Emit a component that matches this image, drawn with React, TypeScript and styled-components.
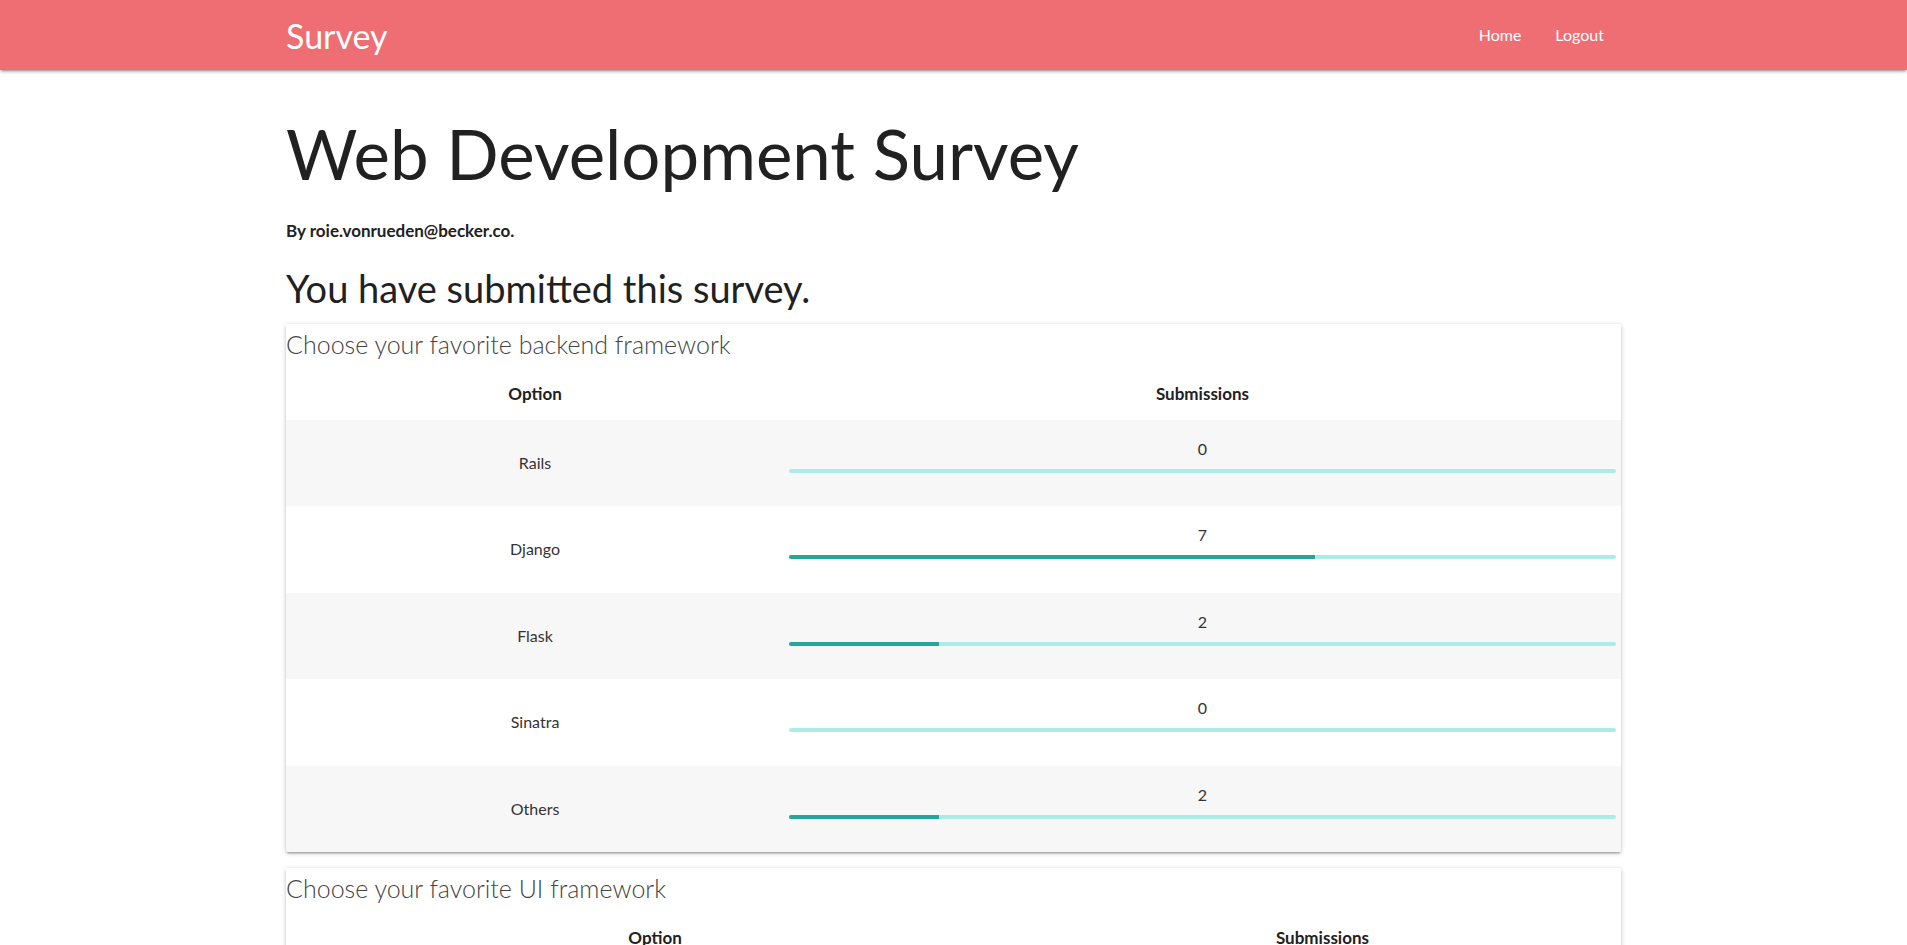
import React from 'react';
import styled, { createGlobalStyle } from 'styled-components';

interface Option {
  label: string;
  count: number;
}

interface Question {
  title: string;
  optionWidth: number;
  options: Option[];
}

const questions: Question[] = [
  {
    title: 'Choose your favorite backend framework',
    optionWidth: 498,
    options: [
      { label: 'Rails', count: 0 },
      { label: 'Django', count: 7 },
      { label: 'Flask', count: 2 },
      { label: 'Sinatra', count: 0 },
      { label: 'Others', count: 2 },
    ],
  },
  {
    title: 'Choose your favorite UI framework',
    optionWidth: 738,
    options: [
      { label: 'Bootstrap', count: 5 },
      { label: 'Materialize', count: 4 },
      { label: 'Foundation', count: 1 },
      { label: 'Others', count: 1 },
    ],
  },
];

const GlobalStyle = createGlobalStyle`
  html, body {
    margin: 0;
    padding: 0;
    background: #fff;
    font-family: Lato, "Noto Sans", sans-serif;
    color: rgba(0, 0, 0, 0.87);
  }
`;

const Nav = styled.nav`
  height: 70px;
  background-color: #ee6e73;
  box-shadow: 0 2px 2px 0 rgba(0, 0, 0, 0.14), 0 3px 1px -2px rgba(0, 0, 0, 0.12),
    0 1px 5px 0 rgba(0, 0, 0, 0.2);
`;

const NavInner = styled.div`
  width: 70%;
  height: 100%;
  margin: 0 auto;
  display: flex;
  align-items: center;
  justify-content: space-between;
`;

const Brand = styled.a`
  color: #fff;
  font-size: 34px;
  text-decoration: none;
`;

const NavLinks = styled.ul`
  display: flex;
  list-style: none;
  margin: 0;
  padding: 0;
`;

const NavLink = styled.a`
  display: block;
  padding: 0 17px;
  color: #fff;
  font-size: 16px;
  line-height: 20px;
  text-decoration: none;
`;

const Container = styled.main`
  width: 70%;
  margin: 0 auto;
  padding-bottom: 40px;
`;

const Title = styled.h1`
  margin: 46px 0 0;
  font-size: 69px;
  font-weight: 400;
  line-height: 110%;
  color: #212121;
`;

const Author = styled.p`
  margin: 28px 0 0;
  font-size: 17px;
  font-weight: 700;
  color: #212121;
`;

const Submitted = styled.h4`
  margin: 27px 0 14px;
  font-size: 38px;
  font-weight: 400;
  line-height: 110%;
  color: #212121;
`;

const Card = styled.section`
  background: #fff;
  border-radius: 2px;
  margin-bottom: 16px;
  box-shadow: 0 2px 2px 0 rgba(0, 0, 0, 0.14), 0 3px 1px -2px rgba(0, 0, 0, 0.12),
    0 1px 5px 0 rgba(0, 0, 0, 0.2);
`;

const CardTitle = styled.div`
  font-size: 25px;
  font-weight: 300;
  line-height: 40px;
  color: #444;
`;

const Table = styled.table`
  width: 100%;
  border-collapse: collapse;
  table-layout: fixed;
`;

const Th = styled.th<{ $width?: number }>`
  box-sizing: border-box;
  width: ${p => (p.$width ? `${p.$width}px` : 'auto')};
  padding: 19px 5px 15px;
  font-size: 17px;
  font-weight: 700;
  line-height: 22px;
  text-align: center;
  color: #212121;
`;

const Row = styled.tr`
  &:nth-child(odd) {
    background-color: rgba(242, 242, 242, 0.6);
  }
`;

const Td = styled.td`
  padding: 18px 5px 18.5px;
  font-size: 16px;
  line-height: 22px;
  text-align: center;
  vertical-align: middle;
  color: #333;
`;

const Progress = styled.div`
  height: 4px;
  margin: 9px 0 15px;
  border-radius: 2px;
  background-color: #acece6;
  overflow: hidden;
`;

const Determinate = styled.div`
  height: 100%;
  background-color: #26a69a;
`;

const QuestionCard: React.FC<{ question: Question }> = ({ question }) => {
  const total = question.options.reduce((sum, o) => sum + o.count, 0);
  return (
    <Card>
      <CardTitle>{question.title}</CardTitle>
      <Table>
        <thead>
          <tr>
            <Th $width={question.optionWidth}>Option</Th>
            <Th>Submissions</Th>
          </tr>
        </thead>
        <tbody>
          {question.options.map(option => (
            <Row key={option.label}>
              <Td>{option.label}</Td>
              <Td>
                <div>{option.count}</div>
                <Progress>
                  <Determinate
                    style={{ width: `${total ? (option.count / total) * 100 : 0}%` }}
                  />
                </Progress>
              </Td>
            </Row>
          ))}
        </tbody>
      </Table>
    </Card>
  );
};

export default function App() {
  return (
    <>
      <GlobalStyle />
      <Nav>
        <NavInner>
          <Brand href="#">Survey</Brand>
          <NavLinks>
            <li><NavLink href="#">Home</NavLink></li>
            <li><NavLink href="#">Logout</NavLink></li>
          </NavLinks>
        </NavInner>
      </Nav>
      <Container>
        <Title>Web Development Survey</Title>
        <Author>By roie.vonrueden@becker.co.</Author>
        <Submitted>You have submitted this survey.</Submitted>
        {questions.map(q => (
          <QuestionCard key={q.title} question={q} />
        ))}
      </Container>
    </>
  );
}
